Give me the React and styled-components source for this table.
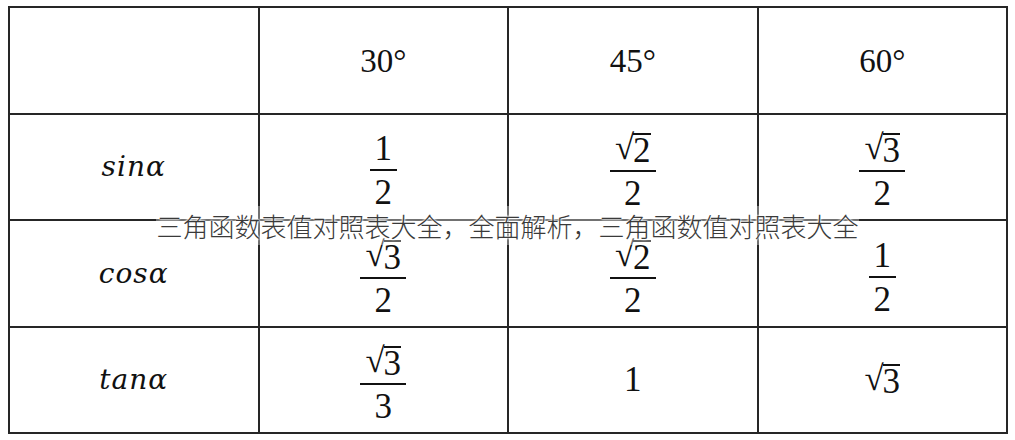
import React from "react";
import styled, { createGlobalStyle } from "styled-components";

const serif = `"Liberation Serif", "Times New Roman", Times, serif`;

const GlobalStyle = createGlobalStyle`
  html, body {
    margin: 0;
    padding: 0;
    background: #fff;
  }
  body {
    font-family: ${serif};
    color: #111;
  }
`;

const rows = [
  { label: "sinα", values: [{ n: "1", d: "2" }, { n: "√2", d: "2" }, { n: "√3", d: "2" }] },
  { label: "cosα", values: [{ n: "√3", d: "2" }, { n: "√2", d: "2" }, { n: "1", d: "2" }] },
  { label: "tanα", values: [{ n: "√3", d: "3" }, { v: "1" }, { v: "√3" }] },
];

const Page = styled.main`
  position: relative;
  width: 1015px;
  height: 440px;
  padding: 6px 0 0 8px;
  box-sizing: border-box;
`;

const Grid = styled.div`
  display: grid;
  grid-template-columns: repeat(4, 1fr);
  grid-template-rows: repeat(4, 1fr);
  gap: 2px;
  padding: 2px;
  width: 1000px;
  height: 428px;
  box-sizing: border-box;
  background: #262626;
`;

const Cell = styled.div`
  background: #fff;
  display: flex;
  align-items: center;
  justify-content: center;
  padding-top: ${({ $shift }) => $shift || 0}px;
  box-sizing: border-box;
  font-family: ${serif};
`;

const Degree = styled.span`
  font-size: 33px;
  line-height: 1;
  padding-top: 3px;
`;

const FuncLabel = styled.span`
  font-family: "DejaVu Serif", serif;
  font-style: italic;
  font-size: 28px;
  letter-spacing: 1px;
`;

const Frac = styled.span`
  display: inline-flex;
  flex-direction: column;
  align-items: center;
  font-size: 35px;
  line-height: 1;
`;

const Bar = styled.span`
  align-self: stretch;
  height: 2px;
  background: #111;
  margin: 3px 0 4px;
`;

const Part = styled.span`
  display: block;
  padding: 0 5px;
`;

const Plain = styled.span`
  font-size: 35px;
  line-height: 1;
`;

const Sqrt = styled.span`
  display: inline-flex;
  align-items: flex-start;
`;

const RadSign = styled.span`
  margin-right: -1px;
`;

const Radicand = styled.span`
  border-top: 2px solid #111;
  margin-top: 3px;
  line-height: 0.92;
`;

const Caption = styled.div`
  position: absolute;
  left: 0;
  right: 0;
  top: 206px;
  text-align: center;
  pointer-events: none;
`;

const CaptionText = styled.span`
  display: inline-block;
  padding: 4px 0;
  font-family: "Noto Sans CJK SC", "Noto Sans", sans-serif;
  font-weight: 300;
  font-size: 26px;
  line-height: 1.2;
  color: #3a3a3a;
  background: rgba(255, 255, 255, 0.35);
  text-shadow: 0 0 2px #fff, 0 0 2px #fff, 0 0 3px #fff;
`;

const Value = ({ text }) =>
  text.startsWith("√") ? (
    <Sqrt>
      <RadSign>√</RadSign>
      <Radicand>{text.slice(1)}</Radicand>
    </Sqrt>
  ) : (
    text
  );

export default function App() {
  return (
    <>
      <GlobalStyle />
      <Page>
        <Grid>
          <Cell />
          {["30°", "45°", "60°"].map((d) => (
            <Cell key={d}>
              <Degree>{d}</Degree>
            </Cell>
          ))}
          {rows.map((row) => (
            <React.Fragment key={row.label}>
              <Cell>
                <FuncLabel>{row.label}</FuncLabel>
              </Cell>
              {row.values.map((v, i) => (
                <Cell key={i} $shift={v.n ? 8 : 0}>
                  {v.n ? (
                    <Frac>
                      <Part>
                        <Value text={v.n} />
                      </Part>
                      <Bar />
                      <Part>{v.d}</Part>
                    </Frac>
                  ) : (
                    <Plain>
                      <Value text={v.v} />
                    </Plain>
                  )}
                </Cell>
              ))}
            </React.Fragment>
          ))}
        </Grid>
        <Caption>
          <CaptionText>三角函数表值对照表大全，全面解析，三角函数值对照表大全</CaptionText>
        </Caption>
      </Page>
    </>
  );
}
